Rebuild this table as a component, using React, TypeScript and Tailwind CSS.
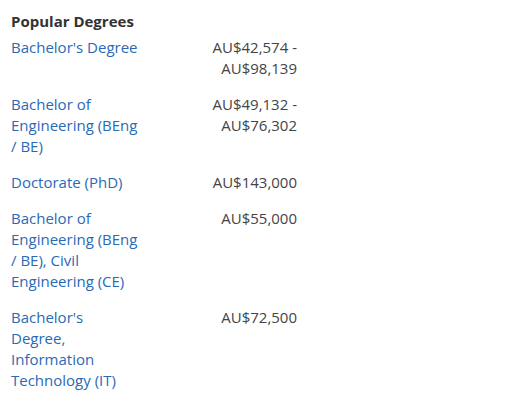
import React from "react";

const rows: { name: string; price: string }[] = [
  { name: "Bachelor's Degree", price: "AU$42,574 - AU$98,139" },
  { name: "Bachelor of Engineering (BEng / BE)", price: "AU$49,132 - AU$76,302" },
  { name: "Doctorate (PhD)", price: "AU$143,000" },
  { name: "Bachelor of Engineering (BEng / BE), Civil Engineering (CE)", price: "AU$55,000" },
  { name: "Bachelor's Degree, Information Technology (IT)", price: "AU$72,500" },
];

export default function App() {
  return (
    <div
      className="w-[530px] h-[410px] bg-white pl-[11px] pt-[11px]"
      style={{ fontFamily: '"Open Sans", sans-serif' }}
    >
      <div className="w-[286px]">
        <h2 className="text-[15px] leading-[21px] font-bold text-[#333]">Popular Degrees</h2>
        <div className="mt-[5px] flex flex-col gap-[15px]">
          {rows.map((r) => (
            <div key={r.name} className="flex justify-between text-[15px] leading-[21px]">
              <a className="w-[129px] text-[#2a6ab5] cursor-pointer">{r.name}</a>
              <div className="w-[100px] text-right text-[#444]">{r.price}</div>
            </div>
          ))}
        </div>
      </div>
    </div>
  );
}
